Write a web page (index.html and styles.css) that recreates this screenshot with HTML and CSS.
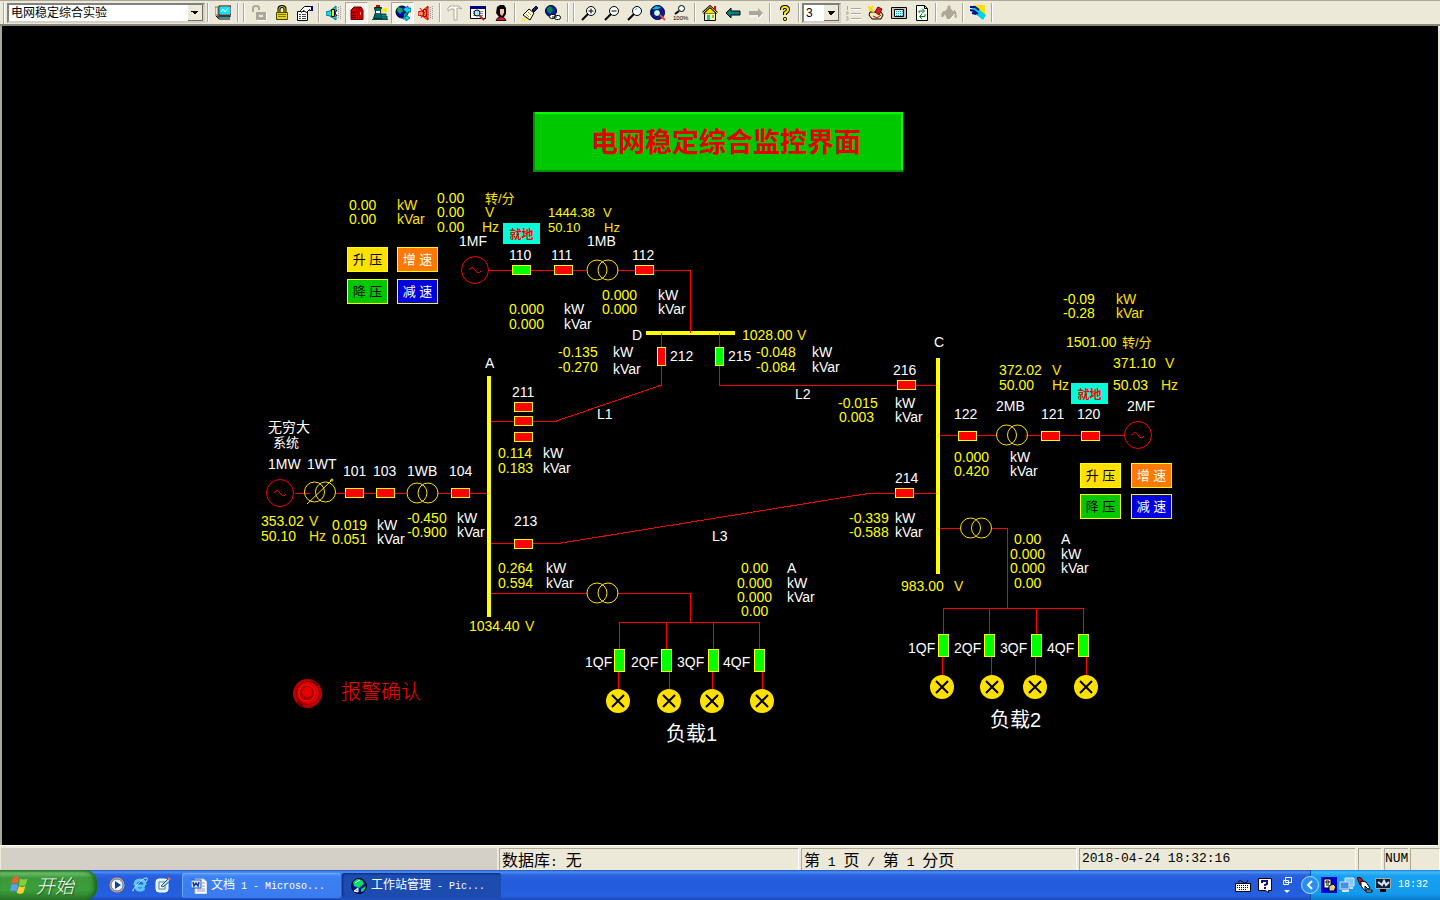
FILE: index.html
```html
<!DOCTYPE html>
<html lang="zh-CN">
<head>
<meta charset="utf-8">
<title>电网稳定综合实验</title>
<link rel="stylesheet" href="styles.css">
</head>
<body>
<div class="screen">
<header class="toolbar">
  <span class="grip"></span>
  <select class="combo combo-page" aria-label="画面"><option>电网稳定综合实验</option></select>
  <span class="sep"></span>
  <button class="tool" aria-label="工作站"><svg viewBox="0 0 16 16"><path d="M0 2h3v8H0z" fill="#ece9d8" stroke="#777"/><path d="M4 1h12v9H4z" fill="#fff" stroke="#000"/><path d="M5 2h10v7H5z" fill="#00e8ff"/><path d="M6 7l2-3 2 3 3-4" stroke="#fff" fill="none"/><path d="M1 11l3 3h11M2 11h13v1H3" stroke="#000" fill="none"/><path d="M5 12h10v1H5z" fill="#00a0b0"/></svg></button>
  <span class="sep double"></span>
  <button class="tool" aria-label="解锁"><svg viewBox="0 0 16 16"><path d="M2 7V3q0-2 3-2t3 2v2" stroke="#aca899" stroke-width="2" fill="none"/><path d="M5 7h10v8H5z" fill="#aca899"/><path d="M6 15.500h9.500V8" stroke="#fff" fill="none"/><path d="M8 11h4" stroke="#ece9d8" stroke-width="2"/></svg></button>
  <button class="tool" aria-label="锁定"><svg viewBox="0 0 16 16"><path d="M5 7V4q0-2.500 3-2.500t3 2.500v3" stroke="#000" stroke-width="3" fill="none"/><path d="M5 7V4q0-2.500 3-2.500t3 2.500v3" stroke="#e8d800" fill="none"/><path d="M2.500 7.500h11v7h-11z" fill="#e8d800" stroke="#4a4400"/><path d="M4 9.500h8M4 11.500h8" stroke="#807800"/></svg></button>
  <button class="tool" aria-label="属性"><svg viewBox="0 0 16 16"><path d="M.5 6.500h10v9H.5z" fill="#fff" stroke="#000"/><path d="M2 9.500h2M5 9.500h4M2 11.500h2M5 11.500h4M2 13.500h2M5 13.500h4" stroke="#444"/><path d="M3.500 5.500l4-4h7v4h-2v-1l-3 3-3-2-2 2z" fill="#fff" stroke="#000"/><path d="M14 1h2v5h-2z" fill="#000080"/></svg></button>
  <span class="sep"></span>
  <button class="tool" aria-label="声音"><svg viewBox="0 0 16 16"><path d="M0 7l4-1 6-5v14l-6-4-4-1z" fill="#00e8ff" stroke="#007080"/><path d="M5.500 4.500h3v7h-3z" fill="#ffe000" stroke="#000"/><path d="M11 5l-2 3 2 3" stroke="#000" fill="#fff"/><path d="M12.500 2v12M14.500 1v14" stroke="#999" stroke-dasharray="1 1"/></svg></button>
  <button class="tool pressed" aria-label="报警箱"><svg viewBox="0 0 16 16"><path d="M2 14.500V5l3-3h7l2 3v9.500z" fill="#d00000" stroke="#600000"/><path d="M8.500 14V5l3-3M3 7.500h4M3 10.500h4M3 12.500h4" stroke="#700000" fill="none"/><path d="M11 7h1v3h-1z" fill="#ff9090"/></svg></button>
  <button class="tool" aria-label="操作员"><svg viewBox="0 0 16 16"><path d="M4 0h4v2H4z" fill="#d00"/><path d="M2.500 2.500h7l-1 5 2 6h-9l2-6z" fill="#006868" stroke="#002828"/><path d="M9 4l6-1v4l-6-1z" fill="#ffe800"/><path d="M4 6h4v2H4z" fill="#fff"/><path d="M9 9h5v1H9M0 14.500h16M10 11h5v3h-5" stroke="#005050" fill="#008080"/></svg></button>
  <button class="tool pressed" aria-label="网络"><svg viewBox="0 0 16 16"><circle cx="7" cy="7" r="6" fill="#0000c0" stroke="#000"/><path d="M3 2l4 1 1 3-3 3-3-3zM9 9l3-2v5l-3 1z" fill="#00b050"/><path d="M8 4l5-3v2h3v4h-3v2zM8 12h3v-2l4 3-4 3v-2H8z" fill="#00d8f8" stroke="#004060" stroke-width=".7"/></svg></button>
  <button class="tool" aria-label="静音"><svg viewBox="0 0 16 16"><path d="M0 7l4-1 6-5v14l-6-4-4-1z" fill="#ff9070" stroke="#e00000"/><path d="M5.500 4.500h3v7h-3z" fill="#ffe000" stroke="#a00"/><path d="M2 3l8 11M10 2L3 13" stroke="#e00000"/><path d="M12.500 2v12M14.500 1v14" stroke="#999" stroke-dasharray="1 1"/></svg></button>
  <span class="sep"></span>
  <button class="tool" aria-label="工具"><svg viewBox="0 0 16 16"><path d="M1 6V3l2-2h9l3 3-3-1h-2v12H7V4H4z" fill="#fff" stroke="#aca899"/></svg></button>
  <button class="tool" aria-label="查找"><svg viewBox="0 0 16 16"><path d="M.5 1.500h15v12H.5z" fill="#fff" stroke="#000"/><path d="M0 1h16v3H0z" fill="#000080"/><path d="M3 6.500h10M3 8.500h10M3 10.500h10" stroke="#888"/><circle cx="7" cy="8" r="3" fill="#90f0ff" stroke="#000"/><path d="M9 10l5 5" stroke="#d02020" stroke-width="2"/></svg></button>
  <button class="tool" aria-label="用户"><svg viewBox="0 0 16 16"><path d="M4 2l3-2h4l2 3v6l-2 3H6L3 8z" fill="#000"/><path d="M7 4h4v4l-2 3-2-2z" fill="#ffc0a0"/><path d="M3 15.500q1-3.500 5-3.500t5 3.500z" fill="#c02050" stroke="#400"/></svg></button>
  <span class="sep"></span>
  <button class="tool" aria-label="清扫"><svg viewBox="0 0 16 16"><path d="M10 5l4-4 2 2-4 4z" fill="#102080" stroke="#000"/><path d="M7 4l5 4-4 7-7-5z" fill="#fffde0" stroke="#000"/><path d="M4 9l3 3M6 7l3 3" stroke="#a89000"/><path d="M0 13.500h6M0 15.500h4" stroke="#ffe000" stroke-dasharray="1 1"/></svg></button>
  <button class="tool" aria-label="连接"><svg viewBox="0 0 16 16"><circle cx="6" cy="6" r="5.500" fill="#0020b0" stroke="#000"/><path d="M2 3l4-2 2 4-3 4-3-3z" fill="#008850"/><rect x="4.500" y="9.500" width="6" height="4" rx="2" fill="#fff" stroke="#000"/><rect x="9.500" y="10.500" width="6" height="4" rx="2" fill="#fff" stroke="#000"/><path d="M7 12h5" stroke="#000"/></svg></button>
  <span class="sep double"></span>
  <button class="tool" aria-label="放大"><svg viewBox="0 0 16 16"><circle cx="10" cy="6" r="4.500" fill="#fff" stroke="#000"/><path d="M7 9l-6 6" stroke="#000" stroke-width="2"/><path d="M7.500 6h5M10 3.500v5" stroke="#000"/></svg></button>
  <button class="tool" aria-label="缩小"><svg viewBox="0 0 16 16"><circle cx="10" cy="6" r="4.500" fill="#fff" stroke="#000"/><path d="M7 9l-6 6" stroke="#000" stroke-width="2"/><path d="M7.500 6h5" stroke="#000"/></svg></button>
  <button class="tool" aria-label="缩放"><svg viewBox="0 0 16 16"><circle cx="10" cy="6" r="4.500" fill="#f4fcff" stroke="#000"/><path d="M7 9l-6 6" stroke="#000" stroke-width="2"/><path d="M8 5l2-2" stroke="#0dd"/></svg></button>
  <button class="tool" aria-label="全局"><svg viewBox="0 0 16 16"><circle cx="7.500" cy="7.500" r="7" fill="#0018b0" stroke="#001"/><path d="M2 4l4-3 5 1-4 3z" fill="#00b8e0"/><circle cx="7" cy="8" r="3.500" fill="#c8f8ff" stroke="#000"/><path d="M10 10l5 5" stroke="#f04040" stroke-width="2"/></svg></button>
  <button class="tool" aria-label="100%"><svg viewBox="0 0 16 16"><circle cx="8.500" cy="3.500" r="3" fill="#e8ffff" stroke="#000"/><path d="M6 6L2 9" stroke="#000" stroke-width="2"/><text x="0" y="15" class="tiny">100%</text></svg></button>
  <span class="sep"></span>
  <button class="tool" aria-label="主页"><svg viewBox="0 0 16 16"><path d="M2.500 8h11v7.500h-11z" fill="#fff89a" stroke="#000"/><path d="M1 8l7-6.500L15 8" fill="#ffe800" stroke="#000" stroke-width="2.500"/><path d="M1 8l7-6.500L15 8" fill="none" stroke="#ffe800"/><path d="M12 1h2v4h-2z" fill="#e00"/><path d="M5 10h3v5H5z" fill="#00c8d8"/><path d="M10 10h2v3h-2z" fill="#80d000"/></svg></button>
  <button class="tool" aria-label="后退"><svg viewBox="0 0 16 16"><path d="M1 8l5-5v3h9v4H6v3z" fill="#008080" stroke="#000"/></svg></button>
  <button class="tool" aria-label="前进"><svg viewBox="0 0 16 16"><path d="M15 9l-5 5v-3H2" fill="none" stroke="#fff"/><path d="M15 8l-5-5v3H1v4h9v3z" fill="#aca899"/></svg></button>
  <span class="sep"></span>
  <button class="tool" aria-label="帮助"><svg viewBox="0 0 16 16"><path d="M5 5V4q0-2 3-2t3 2.500q0 2-3 3.500v2" stroke="#000" stroke-width="4" fill="none"/><circle cx="8" cy="14" r="2" fill="#000"/><path d="M5 5V4q0-2 3-2t3 2.500q0 2-3 3.500v2M8 13v2" stroke="#ffe800" stroke-width="2" fill="none"/></svg></button>
  <span class="sep"></span>
  <select class="combo combo-level" aria-label="层"><option>3</option></select>
  <button class="tool" aria-label="列表"><svg viewBox="0 0 16 16"><path d="M6 3.500h10M6 8.500h10M6 13.500h10" stroke="#aca899"/><path d="M6 4.500h10M6 9.500h10M6 14.500h10" stroke="#fff"/><path d="M2.500 1v4M1 7h2v2H1M1 12h2v3H1" stroke="#aca899" fill="none"/></svg></button>
  <button class="tool" aria-label="编辑"><svg viewBox="0 0 16 16"><path d="M2 7h11l2 3-2 4H4L1 10z" fill="#f4e8b0" stroke="#000"/><path d="M0 1l6 6M1 6l4-5" stroke="#ffd800" stroke-width="2"/><path d="M7 7l3-5 4 2-3 6z" fill="#e02020" stroke="#600"/><path d="M5 11l4 2 4-3" stroke="#b00" fill="none"/></svg></button>
  <button class="tool" aria-label="窗口"><svg viewBox="0 0 16 16"><path d="M.5 2.500h15v11H.5z" fill="#c8c4b8" stroke="#000"/><path d="M3.500 4.500h9v7h-9z" fill="#d8fbff" stroke="#000"/><path d="M5 6.500h7M5 8.500h7M5 10.500h7" stroke="#00a8b8" stroke-dasharray="1 1"/></svg></button>
  <button class="tool" aria-label="刷新"><svg viewBox="0 0 16 16"><path d="M2.500.5h8l3 3v12h-11z" fill="#fff" stroke="#000"/><path d="M10.500.5v3h3" stroke="#000" fill="none"/><path d="M5 8V6h5M8 3.500l2.500 2.500L8 8.500M11 9v2.500H6M8 9l-2.500 2.500L8 14" stroke="#008000" fill="none"/></svg></button>
  <span class="sep thin"></span>
  <button class="tool" aria-label="填充"><svg viewBox="0 0 16 16"><path d="M3 7l5-5 6 6-5 6H6z" fill="#aca899"/><path d="M7 6V1h2v4M3 6q-3 2-2 6 2-1 3-4zM13 5q3 2 2 8l-2-3" fill="#aca899" stroke="#aca899"/><path d="M9 15l5-6" stroke="#fff"/></svg></button>
  <span class="sep"></span>
  <button class="tool" aria-label="手动"><svg viewBox="0 0 16 16"><path d="M3 0h12v9H3z" fill="#ffe000"/><path d="M2 3l6 0 3 3 5 4-3 5-5-4-5-3z" fill="#00d0f0"/><path d="M0 2h5l4 3M0 5l4 1 4 3M2 8l4 1" stroke="#001080" stroke-width="2" fill="none"/></svg></button>
  <span class="sep thin"></span>
</header>

<main class="stage">
<svg class="diagram" viewBox="2 26 1436 819" role="img" aria-label="电网稳定综合监控界面">
  <defs>
    <g id="gen"><circle r="13.500"/><path d="M-6 0q3-5 6 0t6 1"/></g>
    <g id="xf"><circle cx="-5.500" r="10"/><circle cx="5.500" r="10"/></g>
    <g id="lamp"><circle r="12"/><path class="cross" d="M-6-6L6 6M6-6L-6 6"/></g>
    <rect id="bh" x="-9" y="-5" width="18" height="9"/>
    <rect id="bv" x="-4" y="-9" width="8" height="18"/>
    <rect id="qf" x="-5" y="-11" width="10" height="22"/>
  </defs>

  <g class="banner">
    <rect x="533" y="112" width="370" height="60" class="banner-dark"/>
    <path d="M535 112h368v58h-2v-56h-366z" class="banner-light"/>
    <rect x="535" y="114" width="366" height="56" class="banner-face"/>
    <text x="591" y="152">电网稳定综合监控界面</text>
  </g>

  <g class="wire">
    <path d="M489 270.500h97M617 270.500h73.500V333"/>
    <path d="M661.500 333v52L555 421.500h-65M719.500 333v52.500H938"/>
    <path d="M490 543.500h68L868 493.500h68M295 493.500h15M335 493.500h71M438 493.500h51"/>
    <path d="M491 593.500h96M617 593.500h73.500v29M619.500 649v-26.500h140V649M666.500 622v27M713.500 622v27"/>
    <path d="M618.500 672v18M669.500 672v18M712.500 672v18M762.500 672v18"/>
    <path d="M938 528.500h23M991 528.500h16.500v80M943.500 634v-25.500h140V634M989.500 608v26M1036.500 608v26"/>
    <path d="M942.500 657v18M991.500 657v18M1035.500 657v18M1086.500 657v18"/>
    <path d="M940 435.500h57M1026 435.500h98"/>
  </g>
  <g class="bus"><path d="M646 333h89M489 376v241M938 358v216"/></g>
  <path class="wire" d="M690.500 328v5M661.500 333v6M719.500 333v6"/>

  <g class="gen">
    <use href="#gen" x="475" y="270"/><use href="#gen" x="280" y="493"/><use href="#gen" x="1138" y="435"/>
  </g>
  <g class="xf">
    <use href="#xf" x="602.500" y="270"/><use href="#xf" x="602.500" y="593"/><use href="#xf" x="422.500" y="493"/>
    <use href="#xf" x="320" y="492"/><use href="#xf" x="1012" y="435"/><use href="#xf" x="976" y="528"/>
    <path d="M307 504l24-23M330 481l2-2" /><circle cx="332" cy="480" r="1"/>
  </g>
  <g class="closed">
    <use href="#bh" x="563.500" y="270.500"/><use href="#bh" x="644.500" y="270.500"/>
    <use href="#bh" x="523.500" y="407.500"/><use href="#bh" x="523.500" y="421.500"/><use href="#bh" x="523.500" y="437.500"/>
    <use href="#bh" x="523.500" y="544.500"/><use href="#bh" x="906.500" y="385.500"/><use href="#bh" x="904.500" y="493.500"/>
    <use href="#bh" x="354.500" y="493.500"/><use href="#bh" x="385.500" y="493.500"/><use href="#bh" x="460.500" y="493.500"/>
    <use href="#bh" x="967.500" y="436.500"/><use href="#bh" x="1050.500" y="436.500"/><use href="#bh" x="1090.500" y="436.500"/>
    <use href="#bv" x="661.500" y="356.500"/>
  </g>
  <g class="open">
    <use href="#bh" x="521.500" y="270.500"/><use href="#bv" x="719.500" y="356.500"/>
    <use href="#qf" x="619.500" y="660.500"/><use href="#qf" x="666.500" y="660.500"/><use href="#qf" x="713.500" y="660.500"/><use href="#qf" x="759.500" y="660.500"/>
    <use href="#qf" x="943.500" y="645.500"/><use href="#qf" x="989.500" y="645.500"/><use href="#qf" x="1036.500" y="645.500"/><use href="#qf" x="1083.500" y="645.500"/>
  </g>
  <g class="lamp">
    <use href="#lamp" x="618" y="701"/><use href="#lamp" x="669" y="701"/><use href="#lamp" x="712" y="701"/><use href="#lamp" x="762" y="701"/>
    <use href="#lamp" x="942" y="687"/><use href="#lamp" x="992" y="687"/><use href="#lamp" x="1035" y="687"/><use href="#lamp" x="1086" y="687"/>
  </g>

  <g class="value">
    <text x="349" y="210">0.00</text><text x="349" y="224">0.00</text>
    <text x="437" y="203">0.00</text><text x="437" y="217">0.00</text><text x="437" y="232">0.00</text>
    <text x="548" y="217" class="narrow">1444.38</text><text x="548" y="232" class="narrow">50.10</text>
    <text x="509" y="314">0.000</text><text x="509" y="329">0.000</text>
    <text x="602" y="300">0.000</text><text x="602" y="314">0.000</text>
    <text x="558" y="357">-0.135</text><text x="558" y="372">-0.270</text>
    <text x="742" y="340">1028.00</text><text x="756" y="357">-0.048</text><text x="756" y="372">-0.084</text>
    <text x="838" y="408">-0.015</text><text x="839" y="422">0.003</text>
    <text x="849" y="523">-0.339</text><text x="849" y="537">-0.588</text>
    <text x="954" y="462">0.000</text><text x="954" y="476">0.420</text>
    <text x="1063" y="304">-0.09</text><text x="1063" y="318">-0.28</text><text x="1066" y="347">1501.00</text>
    <text x="999" y="375">372.02</text><text x="999" y="390">50.00</text>
    <text x="1113" y="368">371.10</text><text x="1113" y="390">50.03</text>
    <text x="498" y="458">0.114</text><text x="498" y="473">0.183</text>
    <text x="498" y="573">0.264</text><text x="498" y="588">0.594</text><text x="469" y="631">1034.40</text>
    <text x="261" y="526">353.02</text><text x="261" y="541">50.10</text>
    <text x="332" y="530">0.019</text><text x="332" y="544">0.051</text>
    <text x="407" y="523">-0.450</text><text x="407" y="537">-0.900</text><text x="901" y="591">983.00</text>
    <text x="741" y="573">0.00</text><text x="737" y="588">0.000</text><text x="737" y="602">0.000</text><text x="741" y="616">0.00</text>
    <text x="1014" y="544">0.00</text><text x="1010" y="559">0.000</text><text x="1010" y="573">0.000</text><text x="1014" y="588">0.00</text>
  </g>
  <g class="unit">
    <text x="397" y="210">kW</text><text x="397" y="224">kVar</text>
    <text x="485" y="203" class="narrow">转/分</text><text x="485" y="217">V</text><text x="482" y="232">Hz</text>
    <text x="603" y="217" class="narrow">V</text><text x="604" y="232" class="narrow">Hz</text>
    <text x="797" y="340">V</text><text x="1116" y="304">kW</text><text x="1116" y="318">kVar</text>
    <text x="1122" y="347" class="narrow">转/分</text><text x="1052" y="375">V</text><text x="1052" y="390">Hz</text>
    <text x="1165" y="368">V</text><text x="1161" y="390">Hz</text><text x="309" y="526">V</text><text x="309" y="541">Hz</text>
    <text x="525" y="631">V</text><text x="954" y="591">V</text>
  </g>
  <g class="tag">
    <text x="459" y="246">1MF</text><text x="587" y="246">1MB</text>
    <text x="509" y="260">110</text><text x="551" y="260">111</text><text x="632" y="260">112</text>
    <text x="564" y="314">kW</text><text x="564" y="329">kVar</text><text x="658" y="300">kW</text><text x="658" y="314">kVar</text>
    <text x="632" y="340">D</text><text x="613" y="357">kW</text><text x="613" y="374">kVar</text>
    <text x="670" y="361">212</text><text x="728" y="361">215</text><text x="485" y="368">A</text>
    <text x="812" y="357">kW</text><text x="812" y="372">kVar</text><text x="934" y="347">C</text>
    <text x="893" y="375">216</text><text x="795" y="399">L2</text><text x="895" y="408">kW</text><text x="895" y="422">kVar</text>
    <text x="895" y="483">214</text><text x="895" y="523">kW</text><text x="895" y="537">kVar</text>
    <text x="954" y="419">122</text><text x="1010" y="462">kW</text><text x="1010" y="476">kVar</text>
    <text x="996" y="411">2MB</text><text x="1041" y="419">121</text><text x="1077" y="419">120</text><text x="1127" y="411">2MF</text>
    <text x="597" y="419">L1</text><text x="512" y="397">211</text><text x="543" y="458">kW</text><text x="543" y="473">kVar</text>
    <text x="514" y="526">213</text><text x="546" y="573">kW</text><text x="546" y="588">kVar</text>
    <text x="268" y="432">无穷大</text><text x="273" y="447" class="narrow">系统</text>
    <text x="268" y="469">1MW</text><text x="307" y="469">1WT</text><text x="343" y="476">101</text><text x="373" y="476">103</text>
    <text x="407" y="476">1WB</text><text x="449" y="476">104</text><text x="377" y="530">kW</text><text x="377" y="544">kVar</text>
    <text x="457" y="523">kW</text><text x="457" y="537">kVar</text><text x="712" y="541">L3</text>
    <text x="787" y="573">A</text><text x="787" y="588">kW</text><text x="787" y="602">kVar</text>
    <text x="1061" y="544">A</text><text x="1061" y="559">kW</text><text x="1061" y="573">kVar</text>
    <text x="585" y="667">1QF</text><text x="631" y="667">2QF</text><text x="677" y="667">3QF</text><text x="723" y="667">4QF</text>
    <text x="908" y="653">1QF</text><text x="954" y="653">2QF</text><text x="1000" y="653">3QF</text><text x="1047" y="653">4QF</text>
    <text x="666" y="741" class="load">负载1</text><text x="990" y="727" class="load">负载2</text>
  </g>

  <g class="local">
    <rect x="503" y="223" width="37" height="21"/><text x="521.500" y="239">就地</text>
    <rect x="1071" y="383" width="37" height="21"/><text x="1089.500" y="399">就地</text>
  </g>

  <g class="alarm">
    <circle cx="307.500" cy="693.500" r="14.500" fill="#b80000"/>
    <circle cx="308" cy="693" r="11.500" fill="#e00000" stroke="#800000"/>
    <circle cx="307" cy="693" r="8" fill="#a80000" stroke="#ff1010"/>
    <circle cx="307" cy="692" r="5" fill="#e80000"/>
    <path d="M297 702l6 4M312 681l6 5" stroke="#600000" stroke-width="2"/>
  </g>
  <foreignObject x="335" y="678" width="92" height="28"><button class="ack">报警确认</button></foreignObject>

  <foreignObject x="347" y="247" width="92" height="58">
    <div class="keys left"><button class="key up">升 压</button><button class="key fast">增 速</button><button class="key down">降 压</button><button class="key slow">减 速</button></div>
  </foreignObject>
  <foreignObject x="1080" y="463" width="93" height="57">
    <div class="keys right"><button class="key up">升 压</button><button class="key fast">增 速</button><button class="key down">降 压</button><button class="key slow">减 速</button></div>
  </foreignObject>
</svg>
</main>

<footer class="status">
  <span class="cell idle"></span>
  <span class="cell"><span class="cjk">数据库</span>: <span class="cjk">无</span></span>
  <span class="cell"><span class="cjk">第</span> 1 <span class="cjk">页</span> / <span class="cjk">第</span> 1 <span class="cjk">分页</span></span>
  <span class="cell">2018-04-24 18:32:16</span>
  <span class="cell"></span>
  <span class="cell num">NUM</span>
  <span class="cell"></span>
</footer>

<nav class="taskbar">
  <button class="start"><svg viewBox="0 0 20 20"><path d="M3 4q3-3 6-1L8 9Q5 7 2 9z" fill="#f06030"/><path d="M10 4q3 2 7 0l-2 6q-3 2-6 0z" fill="#80d040"/><path d="M2 10q3-2 6 0l-1 6q-3-2-6 0z" fill="#58a0ff"/><path d="M9 11q3 2 6 0l-2 6q-3 2-6 0z" fill="#ffd030"/></svg><span>开始</span></button>
  <div class="quick">
    <button class="q" aria-label="播放器"><svg viewBox="0 0 16 16"><circle cx="8" cy="8" r="7.500" fill="#f0a050"/><circle cx="8" cy="8" r="6" fill="#e8f4ff" stroke="#4080d0"/><circle cx="8" cy="8" r="4" fill="#fff"/><path d="M6 4l6 4-6 4z" fill="#1040a0"/></svg></button>
    <button class="q" aria-label="浏览器"><svg viewBox="0 0 16 16"><path d="M13 9H4q0 4 4 4 3 0 4-2M3 8q0-5 5-5t5 5" fill="none" stroke="#60c8ff" stroke-width="3"/><path d="M2 13Q-2 16 5 8T15 1q1 1-1 4" fill="none" stroke="#b8e8ff"/></svg></button>
    <button class="q" aria-label="显示桌面"><svg viewBox="0 0 16 16"><rect x="1" y="2" width="12" height="13" rx="3" fill="#d8f0ff" stroke="#fff"/><path d="M4 5h6v7H4z" fill="#fff" stroke="#4080b0"/><path d="M6 9l7-7 2 2-7 6z" fill="#b0e0ff" stroke="#205080"/><path d="M13 1l2 2" stroke="#ff8030" stroke-width="2"/></svg></button>
  </div>
  <button class="task"><svg viewBox="0 0 16 16"><path d="M4 1h9l3 3v12H4z" fill="#fff" stroke="#b0c0e0"/><path d="M6 11h8M6 13h8M11 5h3M11 8h3" stroke="#8098c8"/><path d="M0 2h10v8H0z" fill="#d8e8ff" stroke="#3058b0"/><path d="M2 4l1 4 2-3 2 3 1-4" stroke="#1038a0" fill="none" stroke-width="1.500"/></svg><span><span class="cjk">文档</span> 1 - Microso...</span></button>
  <button class="task active"><svg viewBox="0 0 16 16"><circle cx="8" cy="8" r="7.500" fill="#001090" stroke="#000"/><path d="M2 4l4-3 5 1 2 4-5 4-5-2zM10 11l5-3-2 5-3 1z" fill="#00e060"/><path d="M4 5l5-3M3 13l4-3v4z" stroke="#fff" fill="#40d0ff"/></svg><span><span class="cjk">工作站管理</span> - Pic...</span></button>
  <div class="lang">
    <svg viewBox="0 0 16 16"><path d="M3 5q2-3 5 0t5-2" stroke="#000" fill="none"/><path d="M.5 6.500h15v8H.5z" fill="#fff" stroke="#000"/><path d="M2 8.500h12M2 10.500h12M4 12.500h8" stroke="#000" stroke-dasharray="1 1"/></svg>
    <svg viewBox="0 0 16 16"><path d="M1.500 1.500h13v12h-3v2l-3-2h-7z" fill="#fff" stroke="#000"/><path d="M5 6V4h5v3L8 8v1M8 10v2" stroke="#101080" stroke-width="2" fill="none"/></svg>
    <svg viewBox="0 0 16 16"><path d="M6.500.5h6v5h-6zM4.500 3.500h5v4h-5z" fill="#2460dc" stroke="#fff"/><path d="M5 13h6l-3 3z" fill="#fff"/></svg>
  </div>
  <div class="tray">
    <button class="chevron" aria-label="展开"><svg viewBox="0 0 18 18"><circle cx="9" cy="9" r="8.500" fill="#2a8ef0" stroke="#a8dcff"/><path d="M11 5L7 9l4 4" stroke="#fff" stroke-width="2" fill="none"/></svg></button>
    <svg viewBox="0 0 16 16"><path d="M0 0h16v16H0z" fill="#0000e0"/><path d="M3 2h7v9H3z" fill="#fff" stroke="#000"/><path d="M5 4h3v2H5zM5 8h3" stroke="#000" fill="none"/><path d="M8 9l4-2 3 3-2 4H8z" fill="#d8d080" stroke="#000"/></svg>
    <svg viewBox="0 0 16 16"><path d="M6 1h9v8H6z" fill="#80c8ff" stroke="#e0e8f0"/><path d="M1 5h9v7H1z" fill="#4090e8" stroke="#d8e0e8"/><path d="M3 14h7M11 11h3" stroke="#d8e0e8" stroke-width="2"/></svg>
    <svg viewBox="0 0 16 16"><path d="M0 0l4 1 3 4-4 3z" fill="#e01010" stroke="#000"/><path d="M4 4l5 1 4 6-2 1-3-3v5l-4-5z" fill="#fff" stroke="#000"/><path d="M9 13h6v2H9z" fill="#ddd" stroke="#000"/></svg>
    <svg viewBox="0 0 16 16"><path d="M.5 1.500h15v10H.5z" fill="#102038" stroke="#aaa"/><path d="M3 5l4 3 2-4 2 4 3-3" stroke="#d8e8ff" stroke-width="2" fill="none"/><path d="M5 12h6v3H5z" fill="#000"/></svg>
    <time>18:32</time>
  </div>
</nav>
</div>
</body>
</html>
```
FILE: styles.css
```css
* { box-sizing: border-box; }
body { margin: 0; background: #000; font-family: "Liberation Sans", "Noto Sans CJK SC", sans-serif; }
button, select { font-family: inherit; margin: 0; padding: 0; border: 0; background: none; }
svg { display: block; }
.screen { display: flex; flex-direction: column; height: 100vh; overflow: hidden; }

.toolbar { flex: none; display: flex; align-items: center; height: 26px; padding-left: 3px; background: #ece9d8; border-top: 1px solid #aca899; border-bottom: 2px solid #8a867a; }
.grip { width: 4px; height: 22px; border-left: 1px solid #aca899; box-shadow: inset 1px 0 #fff; }
.combo { flex: none; appearance: none; height: 20px; padding-left: 2px; border: 2px solid; border-color: #808080 #d4d0c8 #d4d0c8 #808080; border-radius: 0; color: #000; font-size: 12px; line-height: 16px; background-color: #fff; background-image: linear-gradient(45deg, transparent 50%, #000 50%), linear-gradient(315deg, transparent 50%, #000 50%), linear-gradient(#ece9d8, #ece9d8), linear-gradient(#706d62, #706d62); background-image: conic-gradient(from 315deg at 50% 100%, #000 90deg, transparent 0), linear-gradient(#ece9d8, #ece9d8), linear-gradient(#706d62, #706d62); background-repeat: no-repeat; background-size: 8px 4px, 14px 15px, 15px 16px; background-position: right 4px top 6px, right 1px top 0, right 0 top 0; }
.combo-page { width: 198px; }
.combo-level { width: 39px; }
.sep { flex: none; width: 6px; height: 19px; background: linear-gradient(90deg, #aca899 1px, #fff 1px, #fff 2px, transparent 2px) 2px 0 no-repeat; }
.sep.thin { width: 4px; }
.sep.double { width: 13px; background: linear-gradient(90deg, #aca899 1px, #fff 1px, #fff 2px, transparent 2px, transparent 6px, #aca899 6px, #aca899 7px, #fff 7px, #fff 8px, transparent 8px) 3px 0 no-repeat; }
.tool { flex: none; display: grid; place-items: center; width: 23px; height: 22px; }
.tool svg { width: 16px; height: 16px; }
.tool.pressed { background: #f7f5ee; border: 1px solid; border-color: #aca899 #fff #fff #aca899; }
.tiny { font: 6px "Liberation Sans", sans-serif; }

.stage { flex: 1; min-height: 0; background: #000; border-left: 2px solid #aca899; border-right: 2px solid #ece9d8; }
.diagram { width: 100%; height: 100%; }
.diagram text { white-space: pre; }
.banner-dark { fill: #009000; }
.banner-light { fill: #00ff00; }
.banner-face { fill: #00c800; }
.banner text { font-size: 27px; font-weight: 700; fill: #e60000; }
.wire { fill: none; stroke: #ff0000; shape-rendering: crispEdges; }
.bus { fill: none; stroke: #ffff00; stroke-width: 4; shape-rendering: crispEdges; }
.gen { fill: none; stroke: #ff0000; }
.xf { fill: none; stroke: #ffe100; }
.closed, .open { stroke: #ffff00; shape-rendering: crispEdges; }
.closed { fill: #ff0000; }
.open { fill: #00ff00; }
.lamp { fill: #ffe100; }
.cross { stroke: #000; stroke-width: 2; }
.value, .unit, .tag { font-size: 14px; }
.value { fill: #ffff00; }
.unit { fill: #ffe100; }
.tag { fill: #fff; }
.narrow { font-size: 13px; }
.load { font-size: 20px; }
.local rect { fill: #00ffd8; }
.local text { font-size: 12px; font-weight: 700; fill: #ff0000; text-anchor: middle; }
.ack { width: 100%; height: 100%; color: #ff0000; font-size: 20px; line-height: 28px; font-weight: 300; white-space: nowrap; }
.keys { display: grid; grid-template-columns: 41px 41px; grid-auto-rows: 25px; column-gap: 9px; row-gap: 7px; }
.keys.right { column-gap: 10px; row-gap: 6px; }
.key { border: 1px solid #ffff00; font-size: 13px; line-height: 22px; white-space: nowrap; }
.up { background: #ffe100; color: #000; }
.down { background: #00c800; color: #000; }
.fast { background: #ff7800; color: #fff; }
.slow { background: #0000e0; color: #fff; }

.status { flex: none; display: grid; grid-template-columns: 496fr 300fr 276fr 277fr 24px 24px 30px; gap: 2px; height: 25px; padding: 2px 0 0 1px; background: #ece9d8; border-top: 1px solid #fff; font: 13px/20px "Liberation Mono", monospace; color: #000; }
.cell { min-width: 0; white-space: pre; padding-left: 2px; border-left: 1px solid #aca899; border-top: 1px solid #aca899; border-right: 1px solid #fff; }
.status .cjk { font: 16px/20px "Noto Sans CJK SC", sans-serif; }
.status .idle { background: #d4d0c8; border: 0; }
.status .num { padding-left: 0; border-right: 0; }

.taskbar { flex: none; display: flex; height: 30px; background: linear-gradient(#1f4fb8 0, #4a90f4 2px, #2a62e0 5px, #235bdb 12px, #2460e0 26px, #1c48b4 30px); color: #fff; font: 10px/22px "Liberation Mono", monospace; }
.taskbar .cjk { font: 12px/22px "Noto Sans CJK SC", sans-serif; }
.taskbar button { color: #fff; }
.start { display: flex; align-items: center; gap: 5px; width: 97px; padding-left: 9px; border-radius: 0 12px 12px 0; background: linear-gradient(#2d7d2d, #6cc06c 3px, #3c983c 8px, #3a9e3a 20px, #2c762c 30px); box-shadow: inset -3px 0 4px #1e651e; font: italic 300 19px/28px "Noto Sans CJK SC", sans-serif; text-shadow: 1px 1px 1px #1b4d1b; }
.start svg { width: 22px; height: 22px; }
.start span { white-space: nowrap; }
.quick { display: flex; align-items: center; gap: 7px; padding: 0 11px 0 12px; }
.q svg { width: 16px; height: 16px; }
.task { display: flex; align-items: center; gap: 4px; width: 159px; height: 25px; margin: 3px 1px 0 0; padding-left: 9px; border-radius: 3px; background: linear-gradient(#5c9cfc, #3c80f4 4px, #3a7cf0); box-shadow: inset 1px 1px #6cacff; font: inherit; white-space: pre; }
.task.active { background: #1c4cb0; box-shadow: inset 1px 1px 2px #0c2c78; }
.task svg { width: 16px; height: 16px; }
.lang { display: flex; align-items: center; gap: 6px; margin-left: auto; padding-right: 15px; }
.lang svg, .tray > svg { width: 16px; height: 16px; }
.tray { display: flex; align-items: center; gap: 2px; width: 130px; background: linear-gradient(#1080d8 0, #40b8f8 2px, #18a0f0 6px, #129aee 24px, #0c78c8 30px); border-left: 1px solid #0c50a0; }
.chevron { margin-left: -10px; }
.chevron svg { width: 18px; height: 18px; }
.tray time { margin-left: 5px; }
```
